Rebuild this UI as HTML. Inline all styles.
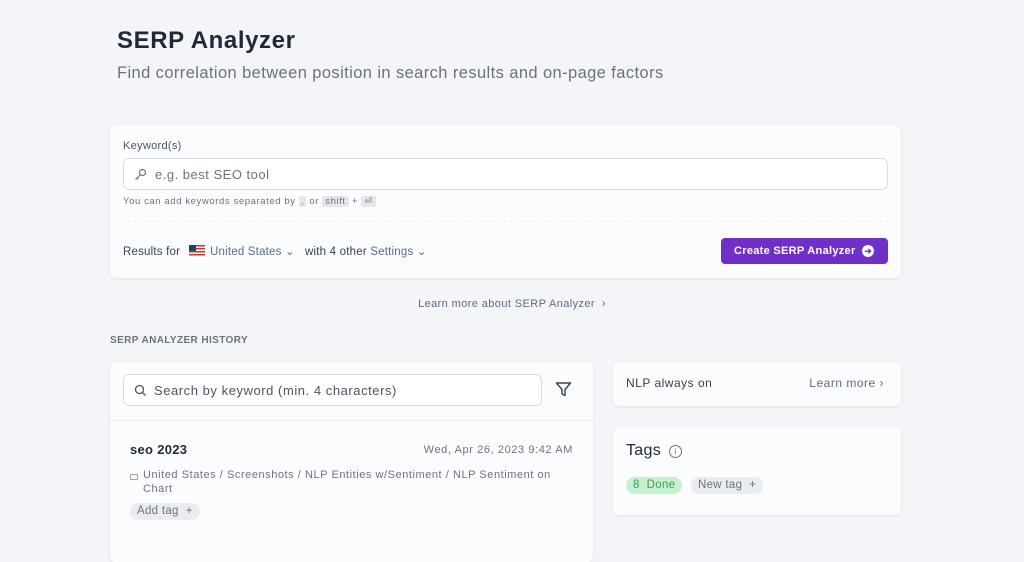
<!DOCTYPE html>
<html><head><style>
*{margin:0;padding:0;box-sizing:border-box}
body{width:1024px;height:556px;overflow:hidden;background:#f3f5f8;font-family:"Liberation Sans",sans-serif;color:#1f2937;position:relative;letter-spacing:.3px}
.a{position:absolute;white-space:nowrap}
.card{position:absolute;background:#fbfcfd;border-radius:6px;box-shadow:0 1px 3px rgba(0,0,0,.08)}
.pill{position:absolute;border-radius:9px;font-size:11.5px;line-height:17px;padding:0 7px}
</style></head><body>
<div class="a" style="left:117px;top:27px;font-size:24px;font-weight:bold;color:#1f2937;letter-spacing:.6px">SERP Analyzer</div>
<div class="a" style="left:117px;top:64px;font-size:16.5px;color:#6b7280;letter-spacing:.4px">Find correlation between position in search results and on-page factors</div>

<div class="card" style="left:110px;top:125px;width:791px;height:153px">
 <div class="a" style="left:13px;top:15px;font-size:11px;color:#4b5563">Keyword(s)</div>
 <div class="a" style="left:13px;top:33px;width:765px;height:32px;border:1px solid #d8dce2;border-radius:6px;background:#fff">
  <svg class="a" style="left:10px;top:9px" width="13" height="13" viewBox="0 0 13 13" fill="none" stroke="#6b7280" stroke-width="1.2"><circle cx="8.5" cy="4.5" r="3"/><path d="M6.3 6.7L1.5 11.5M3 10l1.2 1.2"/></svg>
  <div class="a" style="left:31px;top:8px;font-size:13px;color:#6b7280;letter-spacing:.5px">e.g. best SEO tool</div>
 </div>
 <div class="a" style="left:13px;top:71px;font-size:9.5px;color:#6b7280;letter-spacing:.6px">You can add keywords separated by <span style="background:#e5e7eb;padding:0 2px;border-radius:2px">,</span> or <span style="background:#e5e7eb;padding:0 3px;border-radius:2px">shift</span> + <span style="background:#e5e7eb;padding:0 3px;border-radius:2px">⏎</span></div>
 <div class="a" style="left:13px;top:96px;width:765px;border-top:1px dashed #eceef1"></div>
 <div class="a" style="left:13px;top:119px;font-size:11.5px;color:#374151;letter-spacing:.2px">Results for <span style="display:inline-block;width:16px;height:11px;vertical-align:-1px;margin:0 2px 0 5px;background:repeating-linear-gradient(#c0392b 0 1.5px,#fff 1.5px 3px);position:relative"><span style="position:absolute;left:0;top:0;width:7px;height:6px;background:#2c3e7a"></span></span> <span style="color:#5b6b85">United States ⌄</span> &nbsp;&nbsp;with 4 other <span style="color:#5b6b85">Settings ⌄</span></div>
 <div class="a" style="left:611px;top:113px;width:167px;height:26px;background:#7030c8;border-radius:4px;color:#fff;font-size:11px;font-weight:bold;line-height:26px;padding-left:13px">Create SERP Analyzer<span style="position:absolute;right:14px;top:7px;width:12px;height:12px;border-radius:50%;background:#fff;color:#7030c8;font-size:9px;line-height:12px;text-align:center;letter-spacing:0">➔</span></div>
</div>

<div class="a" style="left:0;width:1024px;top:298px;text-align:center;font-size:11px;color:#5b6b85;letter-spacing:.4px">Learn more about SERP Analyzer &nbsp;›</div>
<div class="a" style="left:110px;top:335px;font-size:10px;font-weight:bold;color:#6b7280;letter-spacing:.4px">SERP ANALYZER HISTORY</div>

<div class="card" style="left:110px;top:362px;width:483px;height:200px">
 <div class="a" style="left:13px;top:12px;width:419px;height:32px;border:1px solid #d8dce2;border-radius:6px;background:#fff">
  <svg class="a" style="left:10px;top:9px" width="13" height="13" viewBox="0 0 13 13" fill="none" stroke="#4b5563" stroke-width="1.3"><circle cx="5.5" cy="5.5" r="4"/><path d="M8.5 8.5l3 3"/></svg>
  <div class="a" style="left:30px;top:8px;font-size:13px;color:#4b5563;letter-spacing:.55px">Search by keyword (min. 4 characters)</div>
 </div>
 <svg class="a" style="left:445px;top:19px" width="17" height="17" viewBox="0 0 17 17" fill="none" stroke="#374151" stroke-width="1.4" stroke-linejoin="round"><path d="M1.5 2h14l-5.5 6.5v6l-3-1.5v-4.5z"/></svg>
 <div class="a" style="left:0;top:58px;width:483px;border-top:1px solid #eceef1"></div>
 <div class="a" style="left:20px;top:80px;font-size:13px;font-weight:bold;color:#1f2937">seo 2023</div>
 <div class="a" style="right:20px;top:82px;font-size:11px;color:#6b7280;letter-spacing:.6px">Wed, Apr 26, 2023 9:42 AM</div>
 <div class="a" style="left:20px;top:106px;width:430px;white-space:normal;font-size:11px;line-height:14px;color:#6b7280;padding-left:13px;letter-spacing:.55px"><span style="position:absolute;left:0;top:6px;width:8px;height:6px;border:1px solid #9ca3af;border-radius:1px"></span>United States / Screenshots / NLP Entities w/Sentiment / NLP Sentiment on Chart</div>
 <div class="pill" style="left:20px;top:141px;background:#e9ecf1;color:#6b7280">Add tag &nbsp;+</div>
</div>

<div class="card" style="left:613px;top:362px;width:288px;height:44px">
 <div class="a" style="left:13px;top:14px;font-size:12px;color:#374151;letter-spacing:.5px">NLP always on</div>
 <div class="a" style="right:17px;top:14px;font-size:12px;color:#5b6b85;letter-spacing:.5px">Learn more ›</div>
</div>
<div class="card" style="left:613px;top:427px;width:288px;height:88px">
 <div class="a" style="left:13px;top:15px;font-size:16px;color:#1f2937">Tags</div>
 <div class="a" style="left:56px;top:18px;width:13px;height:13px;border:1px solid #6b7280;border-radius:50%;font-size:8px;line-height:11px;text-align:center;color:#6b7280;letter-spacing:0">i</div>
 <div class="pill" style="left:13px;top:50px;background:#c6f0d0;color:#3f9e5a">8 &nbsp;Done</div>
 <div class="pill" style="left:78px;top:50px;background:#e9ecf1;color:#6b7280">New tag &nbsp;+</div>
</div>
</body></html>
